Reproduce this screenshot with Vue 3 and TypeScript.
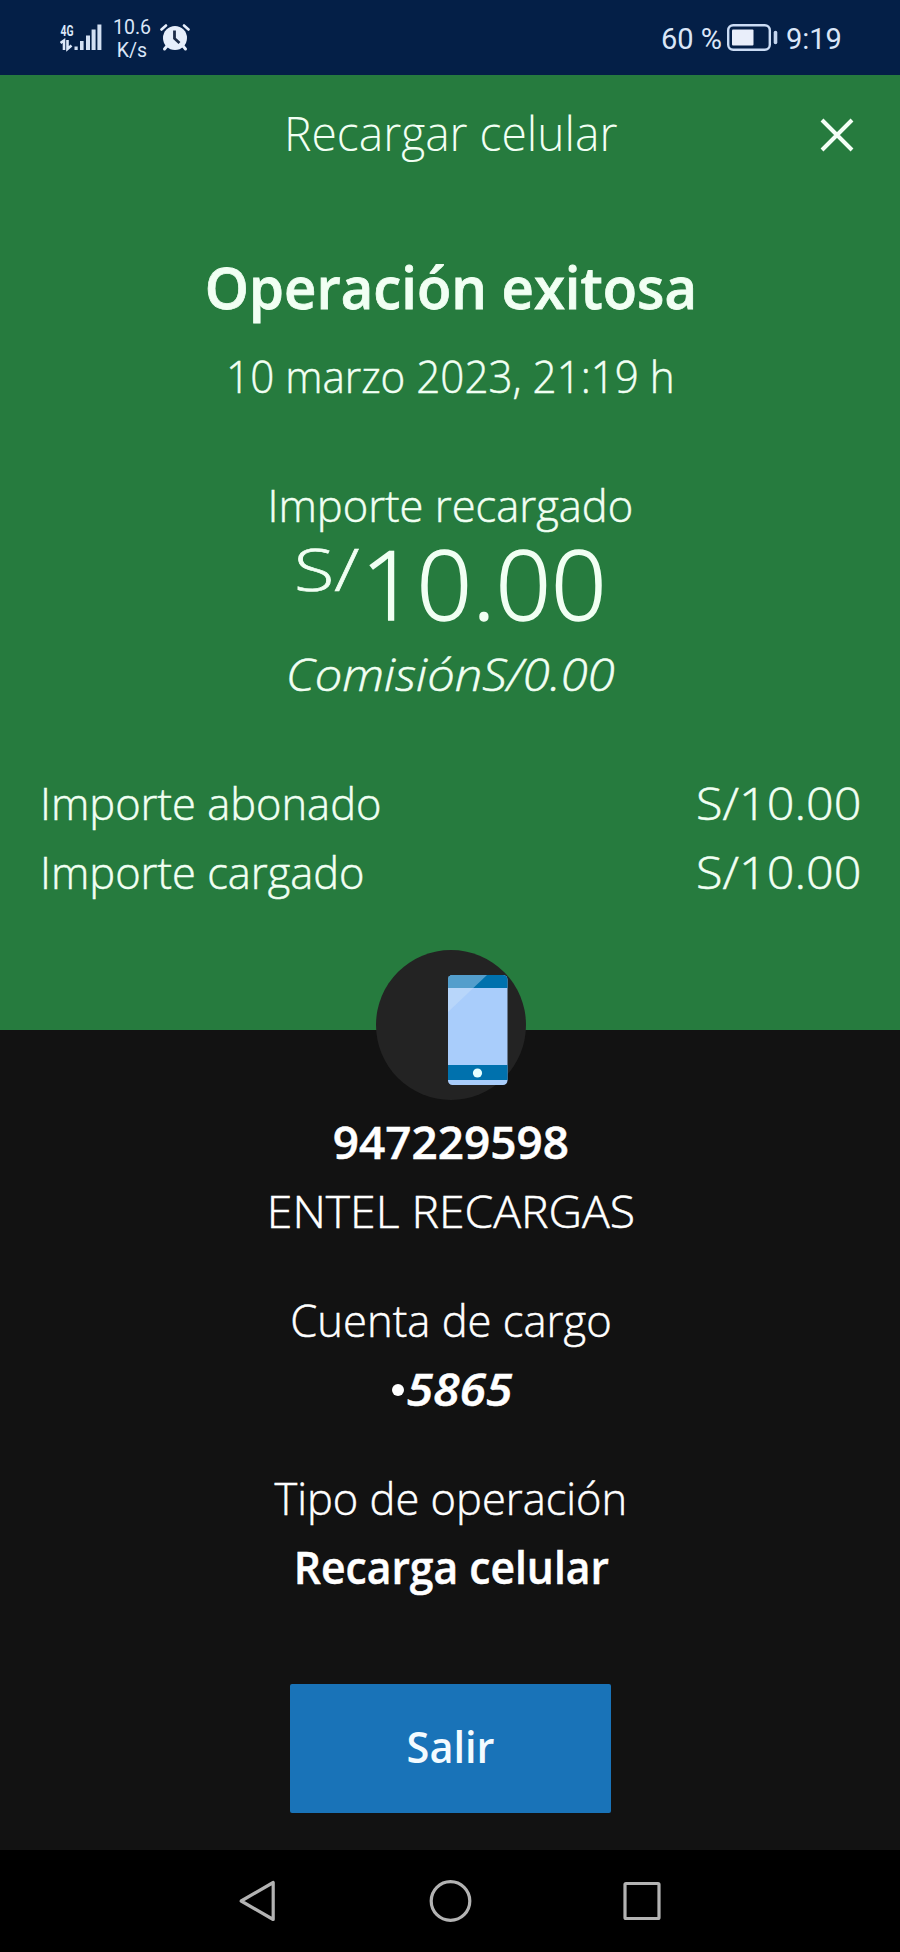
<script setup lang="ts">
interface AmountRow {
  label: string
  value: string
  kind: string
}

const rows: AmountRow[] = [
  { label: 'Importe abonado', value: 'S/10.00', kind: 'paid' },
  { label: 'Importe cargado', value: 'S/10.00', kind: 'charged' },
]
</script>

<template>
  <div class="screen">
    <div class="status">
      <svg class="signal" width="44" height="30" viewBox="0 0 44 30">
        <text class="net" x="0.5" y="12" textLength="13" lengthAdjust="spacingAndGlyphs">4G</text>
        <path d="M0.5 19 L4 16.500 V26 M7.5 16 V25 L11.5 21.5" fill="none" stroke="#dce8fa" stroke-width="2.600" />
        <path d="M14.500 22.5h3.200v3.5h-3.200zM20 17h3.600v9H20zM26 11.5h4V26h-4zM31.600 5.500h4V26h-4zM37.400 0.500h4V26h-4z" fill="#d3e0f3" />
      </svg>
      <div class="speed"><span>10.6</span><span>K/s</span></div>
      <svg class="alarm" width="30" height="28" viewBox="0 0 30 28">
        <circle cx="15" cy="14" r="12" fill="#e6eefb" />
        <path d="M1.500 5.500 L6 1.500 M24 1.500 L28.500 5.500" stroke="#e6eefb" stroke-width="2.600" stroke-linecap="round" />
        <path d="M7 22 L4.500 25 M23 22 L25.500 25" stroke="#e6eefb" stroke-width="3" stroke-linecap="round" />
        <path d="M14.500 6.500 V14.500 L19.500 19" fill="none" stroke="#1d2c49" stroke-width="2.800" />
      </svg>
      <span class="percent">60 %</span>
      <svg class="battery" width="52" height="28" viewBox="0 0 52 28">
        <rect x="1.200" y="1.200" width="41.600" height="24.600" rx="5" fill="none" stroke="#cbdcf5" stroke-width="2.400" />
        <rect x="5" y="5.500" width="21.500" height="16" rx="1" fill="#e9eefa" />
        <path d="M48.500 8.500v10" stroke="#c3d4ef" stroke-width="3.600" stroke-linecap="round" />
      </svg>
      <span class="clock">9:19</span>
    </div>

    <section class="summary">
      <header class="header">
        <h1 class="title"><span class="fit">Recargar celular</span></h1>
        <svg class="close" width="34" height="34" viewBox="0 0 34 34">
          <path d="M2 2 L32 32 M32 2 L2 32" stroke="#f4fff6" stroke-width="4" />
        </svg>
      </header>
      <h2 class="result"><span class="fit">Operación exitosa</span></h2>
      <p class="line date"><span class="fit">10 marzo 2023, 21:19 h</span></p>
      <p class="line topup"><span class="fit">Importe recargado</span></p>
      <div class="amount"><span class="currency">S/</span><span class="number">10.00</span></div>
      <p class="line fee"><span class="fit">ComisiónS/0.00</span></p>
      <div class="rows">
        <div v-for="row in rows" :key="row.kind" class="line row">
          <span class="label">{{ row.label }}</span>
          <span class="value">{{ row.value }}</span>
        </div>
      </div>
    </section>

    <section class="details">
      <div class="badge">
        <svg width="150" height="150" viewBox="0 0 150 150">
          <defs>
            <clipPath id="phone"><rect x="72" y="25" width="59.500" height="110" rx="4.500" /></clipPath>
          </defs>
          <circle cx="75" cy="75" r="75" fill="#232323" />
          <g clip-path="url(#phone)">
            <rect x="72" y="25" width="60" height="110" fill="#a9cdfb" />
            <rect x="72" y="25" width="60" height="13" fill="#0071ad" />
            <path d="M72 25 H111 L72 62z" fill="#d0e3fb" fill-opacity=".4" />
            <rect x="72" y="115" width="60" height="15" fill="#0071ad" />
          </g>
          <circle cx="101.500" cy="123" r="4.600" fill="#e6ffff" />
        </svg>
      </div>
      <div class="group">
        <p class="line strong phone"><span class="fit">947229598</span></p>
        <p class="line company"><span class="fit">ENTEL RECARGAS</span></p>
      </div>
      <div class="group">
        <p class="line source"><span class="fit">Cuenta de cargo</span></p>
        <p class="line strong account"><span class="dot"></span><em class="digits">5865</em></p>
      </div>
      <div class="group">
        <p class="line kind"><span class="fit">Tipo de operación</span></p>
        <p class="line strong operation"><span class="fit">Recarga celular</span></p>
      </div>
      <button class="exit" type="button"><span class="fit">Salir</span></button>
    </section>

    <nav class="nav">
      <svg width="500" height="102" viewBox="0 0 500 102">
        <g fill="none" stroke="#b3b3b3" stroke-width="3.200" stroke-linejoin="round">
          <path d="M73.200 32.500 V69.500 L41.200 51z" />
          <circle cx="250.500" cy="51" r="19.300" />
          <rect x="425" y="33.500" width="34" height="35" rx="1" />
        </g>
      </svg>
    </nav>
  </div>
</template>

<style>
body {
  margin: 0;
  background: #000;
}
</style>

<style scoped>
.screen {
  width: 900px;
  height: 1952px;
  display: flex;
  flex-direction: column;
  overflow: hidden;
  background: #121212;
  color: #fff;
  font-family: "Open Sans", "Noto Sans", sans-serif;
  font-weight: 300;
}
h1, h2, p { margin: 0; font-weight: inherit; }
.fit { display: inline-block; white-space: pre; }

.status {
  box-sizing: border-box;
  height: 75px;
  padding-left: 60px;
  display: flex;
  align-items: flex-start;
  background: #041f47;
  color: #dae6f8;
  font-family: Roboto, sans-serif;
  font-weight: 400;
}
.signal { margin-top: 24px; }
.net { font: 700 14px Roboto, sans-serif; fill: #dce8fa; }
.speed {
  width: 56px;
  padding-top: 16px;
  display: flex;
  flex-direction: column;
  align-items: center;
  font-size: 19.5px;
  line-height: 23px;
}
.alarm { margin-top: 24px; }
.percent {
  width: 66px;
  margin-left: 471px;
  font-size: 29px;
  line-height: 78px;
  white-space: nowrap;
}
.battery { margin-top: 24px; }
.clock { margin-left: 7px; font-size: 29px; line-height: 78px; }

.summary {
  height: 955px;
  background: #267b3e;
  color: #f1fff3;
}
.header {
  position: relative;
  height: 114px;
  text-align: center;
}
.title { padding-left: 2px; font-size: 47px; line-height: 116px; }
.title .fit { transform: scaleX(.982); }
.close { position: absolute; right: 46px; top: 43px; }
.result {
  margin-top: 58px;
  padding-left: 2px;
  font-size: 58px;
  font-weight: 600;
  line-height: 80px;
  text-align: center;
  -webkit-text-stroke: .8px currentColor;
}
.result .fit { transform: scaleX(.969); }
.line {
  font-size: 45px;
  line-height: 69px;
  text-align: center;
  -webkit-text-stroke: .5px currentColor;
}
.date { margin-top: 14px; }
.date .fit { transform: scaleX(.937); }
.topup { margin-top: 60px; }
.topup .fit { transform: scaleX(.966); }
.amount {
  height: 86px;
  padding-left: 294px;
  display: flex;
  align-items: flex-start;
}
.currency {
  width: 67px;
  font-size: 59px;
  line-height: 59px;
  transform: scaleX(1.25);
  transform-origin: left;
  -webkit-text-stroke: .7px currentColor;
}
.number {
  font-size: 96px;
  line-height: 87px;
  transform: scaleX(1.015);
  transform-origin: left;
  -webkit-text-stroke: 1.5px currentColor;
}
.fee { margin-top: 14px; font-style: italic; }
.fee .fit { transform: scaleX(1.088); }
.rows { margin-top: 60px; padding: 0 39px 0 40px; }
.row { display: flex; justify-content: space-between; }
.label { transform: scaleX(.965); transform-origin: left; }
.value { transform: scaleX(1.078); transform-origin: right; }

.details {
  position: relative;
  height: 820px;
  text-align: center;
}
.badge {
  position: absolute;
  left: 376px;
  top: -80px;
  width: 150px;
  height: 150px;
}
.group { padding: 40px 0 0 2px; }
.badge + .group { padding-top: 77px; }
.strong { font-weight: 600; }
.phone .fit { transform: scaleX(1.02); }
.company .fit { transform: scaleX(1.029); }
.source .fit { transform: scaleX(.968); }
.kind .fit { transform: scaleX(.965); }
.operation .fit { transform: scaleX(.947); }
.account {
  display: flex;
  justify-content: center;
  align-items: center;
  gap: 6px;
}
.dot { width: 12px; height: 12px; margin-top: 2px; border-radius: 50%; background: #fff; }
.digits { transform: scaleX(1.068); }
.exit {
  width: 321px;
  height: 129px;
  margin-top: 83px;
  padding: 0 0 4px 2px;
  border: 0;
  border-radius: 2px;
  background: #1973b8;
  color: #f3fbff;
  font: 600 43px "Open Sans", sans-serif;
}
.exit .fit { transform: scaleX(.965); }

.nav {
  height: 102px;
  padding-left: 200px;
  background: #000;
}
</style>
